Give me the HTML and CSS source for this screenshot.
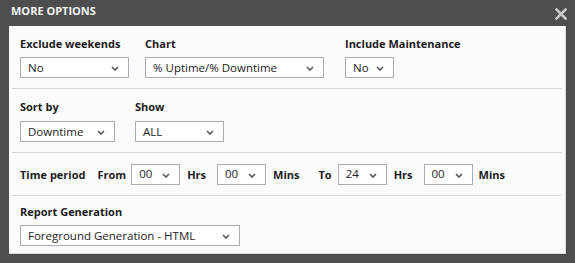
FILE: index.html
```html
<!DOCTYPE html>
<html>
<head>
<meta charset="utf-8">
<link rel="stylesheet" href="styles.css">
</head>
<body>
<div class="header">
  <span class="title">MORE OPTIONS</span>
  <svg class="close" width="12" height="12" viewBox="0 0 12 12"><path d="M1.5 1.5 L10.5 10.5 M10.5 1.5 L1.5 10.5" stroke="#c8c8c8" stroke-width="2.6" stroke-linecap="square"/></svg>
</div>
<div class="panel">
  <div class="section s1">
    <div class="field w125">
      <div class="label">Exclude weekends</div>
      <div class="select" style="width:109px"><span>No</span><svg class="chev" width="8" height="5" viewBox="0 0 8 5"><path d="M1 1 L4 4 L7 1" fill="none" stroke="#555" stroke-width="1.6"/></svg></div>
    </div>
    <div class="field w200">
      <div class="label">Chart</div>
      <div class="select" style="width:179px"><span>% Uptime/% Downtime</span><svg class="chev" width="8" height="5" viewBox="0 0 8 5"><path d="M1 1 L4 4 L7 1" fill="none" stroke="#555" stroke-width="1.6"/></svg></div>
    </div>
    <div class="field">
      <div class="label">Include Maintenance</div>
      <div class="select" style="width:49px"><span>No</span><svg class="chev" width="8" height="5" viewBox="0 0 8 5"><path d="M1 1 L4 4 L7 1" fill="none" stroke="#555" stroke-width="1.6"/></svg></div>
    </div>
  </div>
  <div class="section s2">
    <div class="field w115">
      <div class="label">Sort by</div>
      <div class="select" style="width:95px"><span>Downtime</span><svg class="chev" width="8" height="5" viewBox="0 0 8 5"><path d="M1 1 L4 4 L7 1" fill="none" stroke="#555" stroke-width="1.6"/></svg></div>
    </div>
    <div class="field">
      <div class="label">Show</div>
      <div class="select" style="width:89px"><span>ALL</span><svg class="chev" width="8" height="5" viewBox="0 0 8 5"><path d="M1 1 L4 4 L7 1" fill="none" stroke="#555" stroke-width="1.6"/></svg></div>
    </div>
  </div>
  <div class="section s3">
    <span class="label tp">Time period</span>
    <span class="label from">From</span>
    <div class="select small" style="width:49px"><span>00</span><svg class="chev" width="8" height="5" viewBox="0 0 8 5"><path d="M1 1 L4 4 L7 1" fill="none" stroke="#555" stroke-width="1.6"/></svg></div>
    <span class="label unit">Hrs</span>
    <div class="select small" style="width:49px"><span>00</span><svg class="chev" width="8" height="5" viewBox="0 0 8 5"><path d="M1 1 L4 4 L7 1" fill="none" stroke="#555" stroke-width="1.6"/></svg></div>
    <span class="label unit mins">Mins</span>
    <span class="label to">To</span>
    <div class="select small" style="width:49px"><span>24</span><svg class="chev" width="8" height="5" viewBox="0 0 8 5"><path d="M1 1 L4 4 L7 1" fill="none" stroke="#555" stroke-width="1.6"/></svg></div>
    <span class="label unit">Hrs</span>
    <div class="select small" style="width:49px"><span>00</span><svg class="chev" width="8" height="5" viewBox="0 0 8 5"><path d="M1 1 L4 4 L7 1" fill="none" stroke="#555" stroke-width="1.6"/></svg></div>
    <span class="label unit last">Mins</span>
  </div>
  <div class="section s4">
    <div class="field">
      <div class="label">Report Generation</div>
      <div class="select" style="width:220px"><span>Foreground Generation - HTML</span><svg class="chev" width="8" height="5" viewBox="0 0 8 5"><path d="M1 1 L4 4 L7 1" fill="none" stroke="#555" stroke-width="1.6"/></svg></div>
    </div>
  </div>
</div>
</body>
</html>
```
FILE: styles.css
```css
html, body {
  margin: 0;
  padding: 0;
}
body {
  background: #4e4e4e;
  font-family: "Open Sans", "Noto Sans", sans-serif;
  width: 575px;
  height: 263px;
  overflow: hidden;
}
.header {
  height: 26px;
  display: flex;
  align-items: center;
  justify-content: space-between;
  padding: 0 8px 0 11px;
  box-sizing: border-box;
}
.title {
  color: #f4f4f4;
  font-weight: 700;
  font-size: 11px;
  margin-top: -5px;
}
.close {
  margin-top: 2px;
}
.panel {
  margin: 0 9px;
  height: 228px;
  background: #fbfbfb;
  box-sizing: border-box;
  border-right: 1px solid #dcdcdc;
  border-bottom: 1px solid #dcdcdc;
}
.section {
  margin: 0 3px;
  padding: 0 8px;
  border-bottom: 1px solid #d9d9d9;
  display: flex;
}
.s1 { padding-top: 11px; height: 63px; box-sizing: border-box; }
.s2 { padding-top: 11px; height: 64px; box-sizing: border-box; }
.s3 { padding-top: 11px; height: 43px; box-sizing: border-box; align-items: flex-start; }
.s4 { padding-top: 9px; border-bottom: none; }
.field {
  display: flex;
  flex-direction: column;
  align-items: flex-start;
}
.w125 { width: 125px; }
.w200 { width: 200px; }
.w115 { width: 115px; }
.label {
  font-weight: 700;
  font-size: 11px;
  line-height: 14px;
  color: #1b1b1b;
  height: 14px;
  margin-bottom: 6px;
  white-space: nowrap;
}
.s2 .label { margin-bottom: 7px; }
.s3 .label {
  margin-bottom: 0;
  line-height: 21px;
  height: 21px;
}
.tp { margin-right: 12px; }
.from { margin-right: 5px; }
.unit { margin-left: 7px; margin-right: 11px; }
.mins { margin-right: 0; }
.last { margin-left: 6px; }
.to { margin-left: 19px; margin-right: 6px; }
.select {
  height: 21px;
  box-sizing: border-box;
  border: 1px solid #a9adb6;
  background: #fff;
  display: flex;
  align-items: center;
  justify-content: space-between;
  padding: 0 9px 0 7px;
  font-size: 11.5px;
  color: #222;
  white-space: nowrap;
}
.select span {
  line-height: 19px;
}
.select.small span {
  line-height: 17px;
  margin-top: -3px;
}
.chev {
  flex: none;
  margin-top: 1px;
}
```
